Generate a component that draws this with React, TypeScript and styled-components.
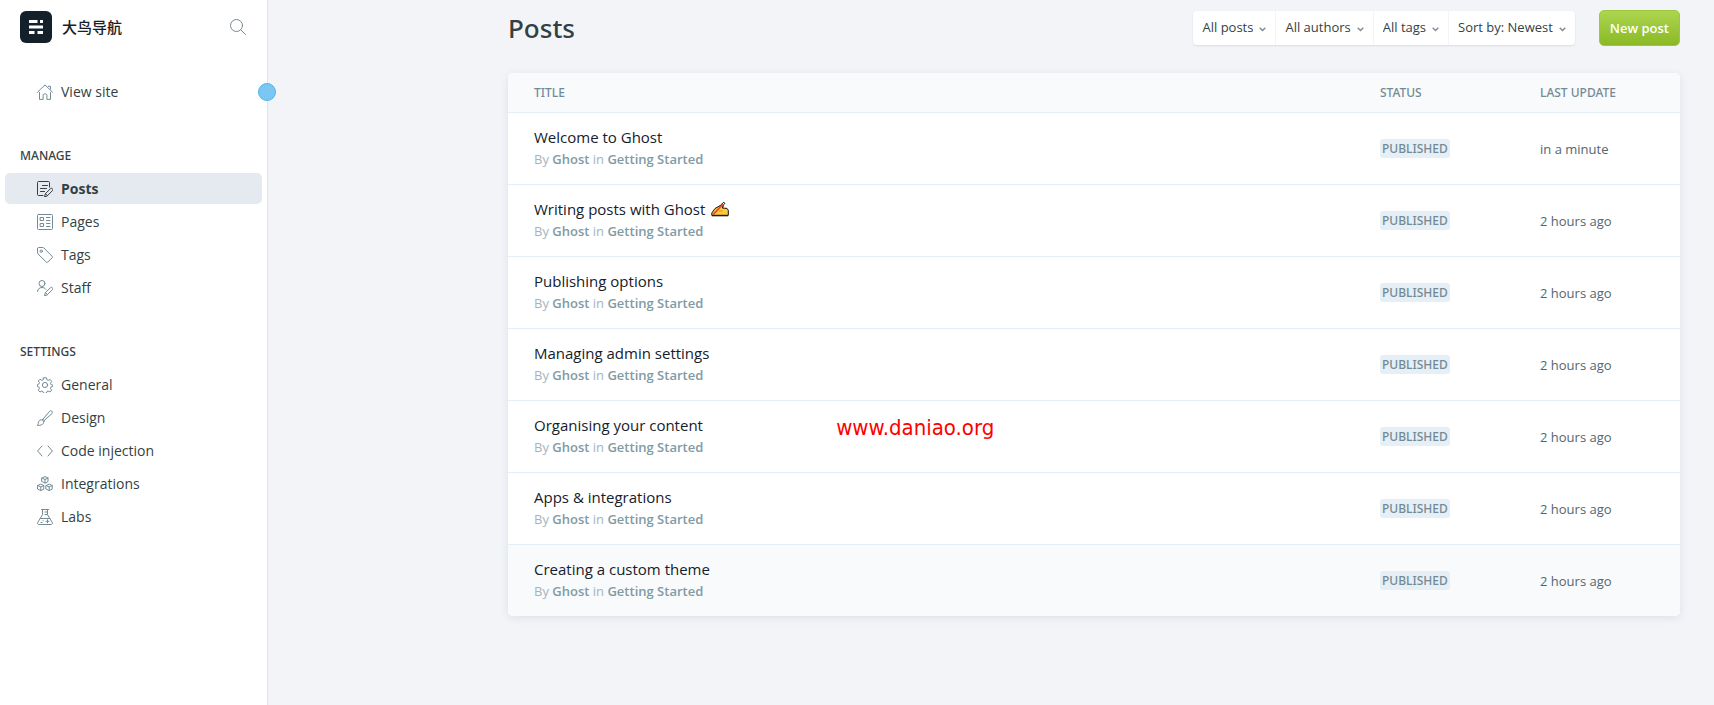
import React from "react";
import styled, { createGlobalStyle, css } from "styled-components";

const color = {
  ink: "#15212a",
  text: "#343f44",
  mid: "#738a94",
  light: "#a4b4bc",
  line: "#e5eff5",
  page: "#f2f4f8",
  tint: "#f9fafc",
};

const mediumFont = `"Noto Sans", "Open Sans", "Noto Sans CJK SC", sans-serif`;

const GlobalStyle = createGlobalStyle`
  *, *::before, *::after { box-sizing: border-box; }
  body {
    margin: 0;
    background: ${color.page};
    color: ${color.text};
    font-family: "Open Sans", "Noto Sans", "Noto Sans CJK SC", sans-serif;
    font-size: 14px;
    line-height: 20px;
  }
  a { color: inherit; text-decoration: none; }
  button, select { font: inherit; color: inherit; }
`;

const Layout = styled.div`
  display: flex;
  min-height: 100vh;
`;

const Sidebar = styled.aside`
  position: relative;
  flex: 0 0 268px;
  background: #fff;
  border-right: 1px solid #dfe4ec;
`;

const EdgeMarker = styled.span`
  position: absolute;
  top: 83px;
  right: -9px;
  width: 18px;
  height: 18px;
  border: 1px solid #4db5ee;
  border-radius: 50%;
  background: #7cc6f2;
`;

const SiteHeader = styled.header`
  display: flex;
  align-items: center;
  gap: 10px;
  padding: 11px 21px 0 20px;
  margin-bottom: 33px;
`;

const SiteName = styled.span`
  flex: 1;
  font-size: 15px;
  font-weight: 500;
  color: ${color.ink};
`;

const IconButton = styled.button`
  display: flex;
  padding: 0;
  border: 0;
  background: none;
  color: ${color.mid};
  cursor: pointer;
`;

const NavGroup = styled.section`
  margin-bottom: 39px;
`;

const NavHeading = styled.h2`
  margin: 0 20px 7px;
  font-family: ${mediumFont};
  font-size: 12px;
  font-weight: 500;
  line-height: 20px;
  text-transform: uppercase;
`;

const NavList = styled.ul`
  display: flex;
  flex-direction: column;
  gap: 2px;
  margin: 0;
  padding: 0 5px;
  list-style: none;
`;

const NavLink = styled.a<{ $active?: boolean }>`
  display: flex;
  align-items: center;
  gap: 8px;
  height: 31px;
  padding: 0 32px;
  border-radius: 5px;
  svg { color: ${color.mid}; }
  ${(p) =>
    p.$active &&
    css`
      background: #e5eaf1;
      font-weight: 700;
      svg { color: ${color.text}; }
    `}
`;

const Main = styled.main`
  flex: 1;
  min-width: 0;
  padding: 10px 34px 40px 240px;
  @media (max-width: 1300px) {
    padding-left: 34px;
  }
`;

const PageHeader = styled.header`
  display: flex;
  align-items: center;
  gap: 24px;
  margin-bottom: 27px;
`;

const PageTitle = styled.h1`
  flex: 1;
  margin: 0;
  font-family: ${mediumFont};
  font-size: 26px;
  font-weight: 500;
  line-height: 36px;
`;

const Filters = styled.div`
  display: flex;
  border-radius: 4px;
  background: #fff;
  box-shadow: 0 1px 2px rgba(40, 60, 80, 0.12);
`;

const FilterBox = styled.label`
  display: grid;
  grid-template-areas: "field";
  align-items: center;
  & + & { border-left: 1px solid ${color.page}; }
  svg {
    grid-area: field;
    justify-self: end;
    margin: 3px 9px 0 0;
    color: #7e8b92;
    pointer-events: none;
  }
`;

const FilterSelect = styled.select`
  grid-area: field;
  height: 34px;
  padding: 0 22px 2px 9px;
  border: 0;
  background: none;
  appearance: none;
  field-sizing: content;
  font-size: 13px;
`;

const PrimaryButton = styled.button`
  height: 36px;
  padding: 0 10px;
  border: 1px solid #9cc93a;
  border-radius: 5px;
  background: linear-gradient(#acd550, #8bb925);
  color: #fff;
  font-size: 13px;
  font-weight: 600;
  white-space: nowrap;
  cursor: pointer;
`;

const Card = styled.div`
  position: relative;
  border-radius: 5px;
  box-shadow: 0 2px 8px rgba(40, 60, 80, 0.1);
`;

const PostTable = styled.table`
  width: 100%;
  border-spacing: 0;
  border-radius: 5px;
  overflow: hidden;
  background: #fff;
  table-layout: fixed;
`;

const HeadCell = styled.th<{ $width?: number }>`
  width: ${(p) => (p.$width ? `${p.$width}px` : "auto")};
  height: 40px;
  padding: 0;
  border-bottom: 1px solid ${color.line};
  background: ${color.tint};
  color: ${color.mid};
  font-family: ${mediumFont};
  font-size: 12px;
  font-weight: 500;
  text-align: left;
  text-transform: uppercase;
  &:first-child { padding-left: 26px; }
`;

const PostRow = styled.tr<{ $hovered?: boolean }>`
  background: ${(p) => (p.$hovered ? color.tint : "#fff")};
  &:last-child td { border-bottom: 0; }
`;

const Cell = styled.td`
  padding: 14px 0 13px;
  border-bottom: 1px solid ${color.line};
  font-size: 13px;
  color: #54666d;
  &:first-child { padding: 13px 0 14px 26px; }
`;

const PostTitle = styled.h3`
  display: flex;
  align-items: center;
  gap: 6px;
  margin: 0;
  font-size: 15px;
  font-weight: 400;
  line-height: 22px;
  color: ${color.ink};
`;

const Byline = styled.p`
  margin: 0;
  font-size: 13px;
  line-height: 22px;
  color: ${color.light};
  strong { font-weight: 600; color: #829aa4; }
`;

const Badge = styled.span`
  display: inline-block;
  padding: 0 2px;
  border-radius: 3px;
  background: ${color.line};
  color: ${color.mid};
  font-family: ${mediumFont};
  font-size: 12px;
  font-weight: 500;
  line-height: 19px;
  text-transform: uppercase;
  vertical-align: top;
`;

const Watermark = styled.span`
  position: absolute;
  top: 341px;
  left: 28%;
  color: #f00;
  font-family: "DejaVu Sans Condensed", "DejaVu Sans", sans-serif;
  font-stretch: condensed;
  font-size: 22px;
  line-height: 28px;
  pointer-events: none;
`;

const Svg = ({ size = 16, children }: { size?: number; children: React.ReactNode }) => (
  <svg width={size} height={size} viewBox="0 0 16 16" fill="none" stroke="currentColor" strokeLinejoin="round" strokeLinecap="round" aria-hidden="true">
    {children}
  </svg>
);

const Pencil = () => <path d="M7.600 15.500l.8-2.800 5-5a1.400 1.400 0 0 1 2 2l-5 5zM8.600 12.700l1.800 1.800" />;

const cube = (x: number, y: number) => (
  <path d={`M${x} ${y}l3 -1.4 3 1.4v3.6l-3 1.5 -3 -1.5zM${x} ${y}l3 1.5 3 -1.5M${x + 3} ${y + 1.5}v3.5`} />
);

const icons: Record<string, React.ReactNode> = {
  home: (
    <Svg>
      <path d="M.5 8.2L8 .9l7.5 7.3M2.5 8.5v6.900h3.600v-4.300c0-.7.5-1.200 1.200-1.200h1.400c.7 0 1.200.5 1.200 1.200v4.300h3.600V8.500M11.400 2.300h2.100v2.800" />
    </Svg>
  ),
  posts: (
    <Svg>
      <path d="M6 14.500H1.500a1 1 0 0 1-1-1v-12a1 1 0 0 1 1-1h10a1 1 0 0 1 1 1v4.700M5.500 4.500h5M3.500 7.500h6M3.500 10.500h4" />
      <Pencil />
    </Svg>
  ),
  pages: (
    <Svg>
      <rect x=".5" y=".5" width="15" height="15" rx="1" />
      <path d="M3.500 3.500h3v3h-3zM3.500 9.500h3v3h-3zM9.500 3.500h3.500M9.500 6.500h3.500M9.500 9.500h3.500M9.500 12.500h3.500" />
    </Svg>
  ),
  tags: (
    <Svg>
      <path d="M.5 1.500v4.300c0 .4.2.8.4 1L9.400 15.200a.9.9 0 0 0 1.300 0l4.500-4.500a.9.9 0 0 0 0-1.300L6.800.9a1.400 1.400 0 0 0-1-.4H1.500a1 1 0 0 0-1 1z" />
      <circle cx="4.200" cy="4.200" r="1.200" />
    </Svg>
  ),
  staff: (
    <Svg>
      <circle cx="5" cy="3.500" r="3" />
      <path d="M.5 11.500C.5 9.200 2.500 7.500 5 7.500c1.600 0 3 .6 4 1.900" />
      <Pencil />
    </Svg>
  ),
  general: (
    <Svg>
      <path d="M6.600.8h2.800l.6 2 1.200.6 2-.9 1.500 2-1.200 1.700.3 1.200 2 .8v1.200l-2 .8-.3 1.300 1.200 1.700-1.700 1.800-1.900-1-1.100.6-.6 1.700H6.600l-.6-1.700-1.200-.6-1.900 1-1.600-1.800 1.200-1.700-.4-1.300-1.800-.8V7.600l1.800-.8.4-1.300L1.300 3.900 3 2.200l1.800 1.200L6 2.800z" />
      <circle cx="8" cy="8" r="2.600" />
    </Svg>
  ),
  design: (
    <Svg>
      <path d="M6 9.200L12.600 1.300a1.600 1.600 0 0 1 2.400 2.200L7.200 10.500M.5 15.400c1-.7.6-1.700.9-3 .3-1.500 1.300-2.600 2.700-2.600 1.500 0 2.500 1 2.500 2.400 0 2.200-2.500 3.400-6.100 3.200zM5.500 9.300c1 .2 1.800 1 1.900 2" />
    </Svg>
  ),
  code: (
    <Svg>
      <path d="M5 3L.6 8 5 13M11 3l4.400 5L11 13" />
    </Svg>
  ),
  integrations: (
    <Svg>
      {cube(5, 2)}
      {cube(0.8, 9.5)}
      {cube(9.2, 9.5)}
    </Svg>
  ),
  labs: (
    <Svg>
      <path d="M4.500.5h7M5.500.5v5.200L.7 13.500c-.5 1 0 2 1.200 2h12.200c1.200 0 1.700-1 1.200-2L10.500 5.700V.5M8 3h2M8 5.500h2M3.300 9.500h9.400M10.500 10.800v3M9 12.300h3M4 13.500h1M6 11.700h.1" />
    </Svg>
  ),
  search: (
    <Svg>
      <circle cx="6.500" cy="6.500" r="6" />
      <path d="M10.900 10.900l4.600 4.600" />
    </Svg>
  ),
};

const Chevron = () => (
  <svg width="7" height="5" viewBox="0 0 7 5" fill="none" stroke="currentColor" strokeWidth="1.4" aria-hidden="true">
    <path d="M.7.8l2.800 2.800L6.300.8" />
  </svg>
);

const Logo = () => (
  <svg width="32" height="32" viewBox="0 0 32 32" role="img" aria-label="Ghost">
    <rect width="32" height="32" rx="6" fill="#15212a" />
    <path fill="#fff" d="M9 9h8.500v3H9zM20 9h3v3h-3zM9 14.500h14v3H9zM9 20h5.500v3H9zM17.500 20H23v3h-5.500z" />
  </svg>
);

const WritingHand = () => (
  <svg width="18" height="16" viewBox="0 0 18 16" role="img" aria-label="writing hand">
    <path d="M.8 14.300V12L4 7.500l5-2.800h3.500L11.300 7l4.700.4 1.300 1.800v5.100z" fill="#ffc83d" stroke="#111" strokeWidth="1" strokeLinejoin="round" />
    <path d="M8.500 5.200L12.800 1.200l1 1L10.700 6" fill="#fff" stroke="#111" strokeWidth="1" />
    <path d="M2 13.700L12.200 3" stroke="#ee4a23" strokeWidth="1.800" />
    <path d="M8 10h3.500" stroke="#d99a1c" strokeWidth="1" />
    <path d="M.8 14.800h16.400" stroke="#111" strokeWidth="1" />
  </svg>
);

type NavItem = { icon: string; label: string; active?: boolean };

const manage: NavItem[] = [
  { icon: "posts", label: "Posts", active: true },
  { icon: "pages", label: "Pages" },
  { icon: "tags", label: "Tags" },
  { icon: "staff", label: "Staff" },
];

const settings: NavItem[] = [
  { icon: "general", label: "General" },
  { icon: "design", label: "Design" },
  { icon: "code", label: "Code injection" },
  { icon: "integrations", label: "Integrations" },
  { icon: "labs", label: "Labs" },
];

const filters = [
  { name: "Post type", value: "All posts" },
  { name: "Author", value: "All authors" },
  { name: "Tag", value: "All tags" },
  { name: "Order", value: "Sort by: Newest" },
];

const posts = [
  { title: "Welcome to Ghost", updated: "in a minute" },
  { title: "Writing posts with Ghost", updated: "2 hours ago", emoji: true },
  { title: "Publishing options", updated: "2 hours ago" },
  { title: "Managing admin settings", updated: "2 hours ago" },
  { title: "Organising your content", updated: "2 hours ago" },
  { title: "Apps & integrations", updated: "2 hours ago" },
  { title: "Creating a custom theme", updated: "2 hours ago", hovered: true },
];

const Nav = ({ heading, items }: { heading?: string; items: NavItem[] }) => (
  <NavGroup>
    {heading && <NavHeading>{heading}</NavHeading>}
    <NavList>
      {items.map((item) => (
        <li key={item.label}>
          <NavLink href="#" $active={item.active} aria-current={item.active ? "page" : undefined}>
            {icons[item.icon]}
            {item.label}
          </NavLink>
        </li>
      ))}
    </NavList>
  </NavGroup>
);

export default function App() {
  return (
    <>
      <GlobalStyle />
      <Layout>
        <Sidebar>
          <SiteHeader>
            <Logo />
            <SiteName>大鸟导航</SiteName>
            <IconButton type="button" aria-label="Search">{icons.search}</IconButton>
          </SiteHeader>
          <nav>
            <Nav items={[{ icon: "home", label: "View site" }]} />
            <Nav heading="Manage" items={manage} />
            <Nav heading="Settings" items={settings} />
          </nav>
          <EdgeMarker />
        </Sidebar>
        <Main>
          <PageHeader>
            <PageTitle>Posts</PageTitle>
            <Filters>
              {filters.map((f) => (
                <FilterBox key={f.name}>
                  <FilterSelect aria-label={f.name} defaultValue={f.value}>
                    <option>{f.value}</option>
                  </FilterSelect>
                  <Chevron />
                </FilterBox>
              ))}
            </Filters>
            <PrimaryButton type="button">New post</PrimaryButton>
          </PageHeader>
          <Card>
            <PostTable>
              <thead>
                <tr>
                  <HeadCell scope="col">Title</HeadCell>
                  <HeadCell scope="col" $width={160}>Status</HeadCell>
                  <HeadCell scope="col" $width={140}>Last update</HeadCell>
                </tr>
              </thead>
              <tbody>
                {posts.map((post) => (
                  <PostRow key={post.title} $hovered={post.hovered}>
                    <Cell>
                      <a href="#">
                        <PostTitle>
                          {post.title}
                          {post.emoji && <WritingHand />}
                        </PostTitle>
                        <Byline>
                          By <strong>Ghost</strong> in <strong>Getting Started</strong>
                        </Byline>
                      </a>
                    </Cell>
                    <Cell><Badge>Published</Badge></Cell>
                    <Cell>{post.updated}</Cell>
                  </PostRow>
                ))}
              </tbody>
            </PostTable>
            <Watermark>www.daniao.org</Watermark>
          </Card>
        </Main>
      </Layout>
    </>
  );
}
